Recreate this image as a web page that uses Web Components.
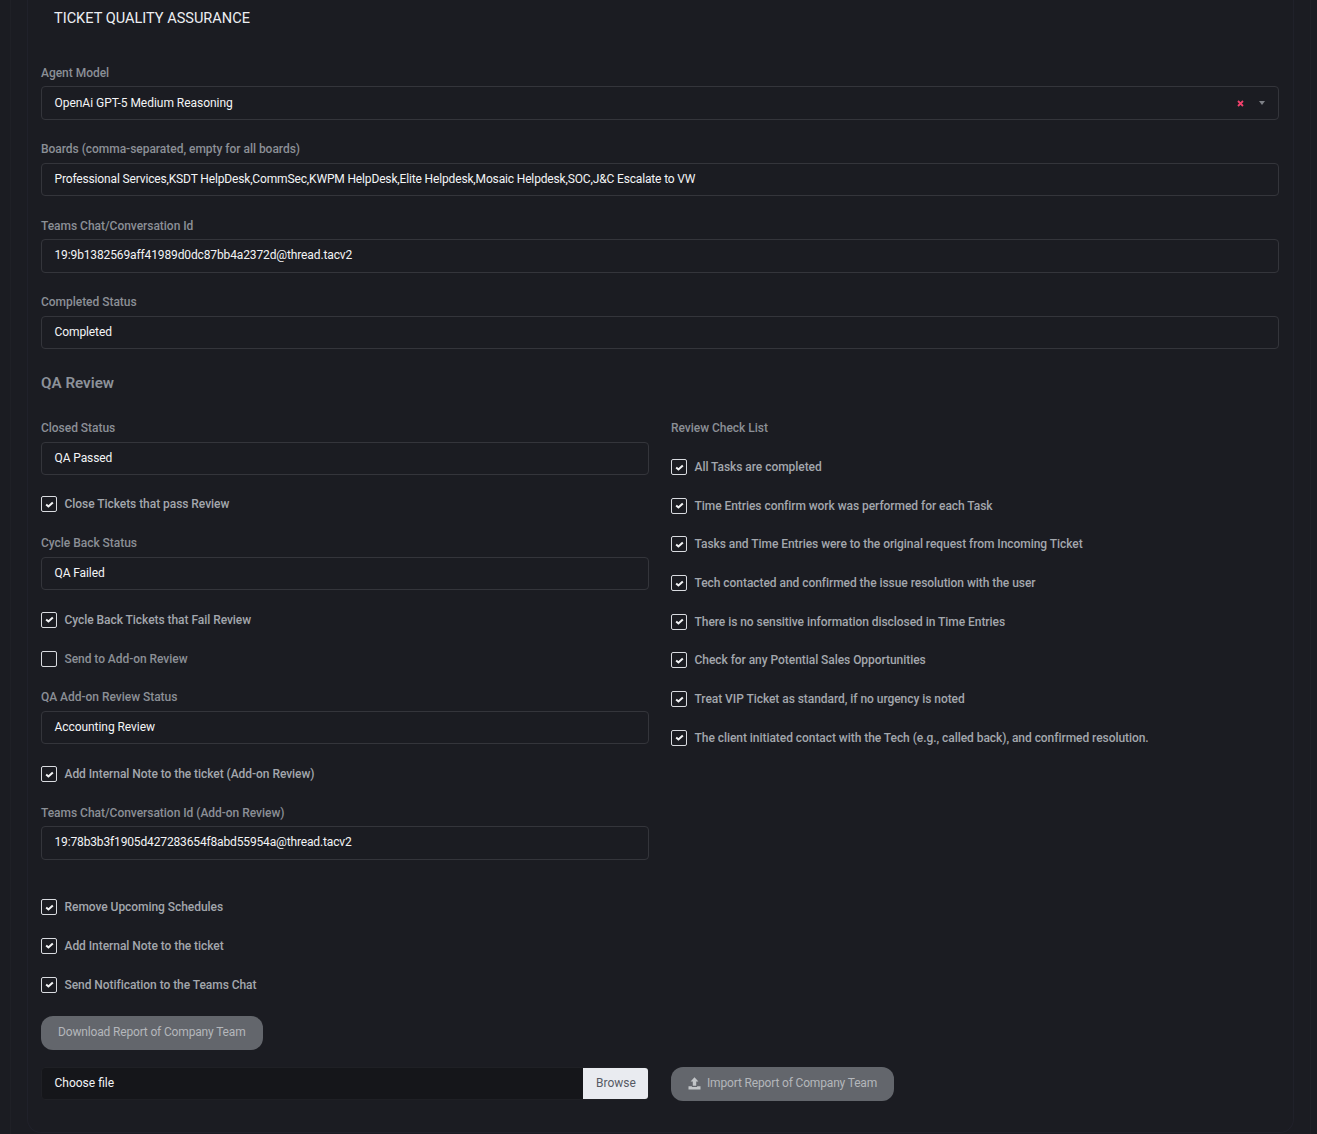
<!DOCTYPE html>
<html>
<head>
<meta charset="utf-8">
<title>Ticket Quality Assurance</title>
<style>
  html, body { margin: 0; height: 1134px; overflow: hidden; background: #1b1c22; }
  body { font: 12px/18px Roboto, "Liberation Sans", sans-serif; color: #a3a7ad; }
</style>
</head>
<body>
<qa-page>
  <qa-field label="Agent Model"><qa-select value="OpenAi GPT-5 Medium Reasoning" style="letter-spacing:-.03px"></qa-select></qa-field>
  <qa-field label="Boards (comma-separated, empty for all boards)"><qa-input value="Professional Services,KSDT HelpDesk,CommSec,KWPM HelpDesk,Elite Helpdesk,Mosaic Helpdesk,SOC,J&amp;C Escalate to VW" style="letter-spacing:-.15px"></qa-input></qa-field>
  <qa-field label="Teams Chat/Conversation Id"><qa-input value="19:9b1382569aff41989d0dc87bb4a2372d@thread.tacv2" style="letter-spacing:-.125px"></qa-input></qa-field>
  <qa-field label="Completed Status"><qa-input value="Completed" style="letter-spacing:-.1px"></qa-input></qa-field>

  <qa-section heading="QA Review">
    <div slot="left">
      <qa-field label="Closed Status"><qa-input value="QA Passed" style="letter-spacing:-.1px"></qa-input></qa-field>
      <qa-check checked style="margin-bottom:21.5px">Close Tickets that pass Review</qa-check>
      <qa-field label="Cycle Back Status"><qa-input value="QA Failed" style="letter-spacing:-.1px"></qa-input></qa-field>
      <qa-check checked style="margin-bottom:21.6px">Cycle Back Tickets that Fail Review</qa-check>
      <qa-check style="margin-bottom:20.4px">Send to Add-on Review</qa-check>
      <qa-field label="QA Add-on Review Status" style="margin-bottom:20.9px"><qa-input value="Accounting Review" style="letter-spacing:-.06px"></qa-input></qa-field>
      <qa-check checked style="margin-bottom:20.7px">Add Internal Note to the ticket (Add-on Review)</qa-check>
      <qa-field label="Teams Chat/Conversation Id (Add-on Review)"><qa-input value="19:78b3b3f1905d427283654f8abd55954a@thread.tacv2" style="letter-spacing:-.145px"></qa-input></qa-field>
      <qa-check checked style="margin-top:38.6px">Remove Upcoming Schedules</qa-check>
      <qa-check checked>Add Internal Note to the ticket</qa-check>
      <qa-check checked>Send Notification to the Teams Chat</qa-check>
    </div>
    <div slot="right" style="--gap:20.9px">
      <qa-field label="Review Check List" style="margin-bottom:0"></qa-field>
      <div style="height:16.6px"></div>
      <qa-check checked>All Tasks are completed</qa-check>
      <qa-check checked>Time Entries confirm work was performed for each Task</qa-check>
      <qa-check checked>Tasks and Time Entries were to the original request from Incoming Ticket</qa-check>
      <qa-check checked>Tech contacted and confirmed the issue resolution with the user</qa-check>
      <qa-check checked>There is no sensitive information disclosed in Time Entries</qa-check>
      <qa-check checked>Check for any Potential Sales Opportunities</qa-check>
      <qa-check checked>Treat VIP Ticket as standard, if no urgency is noted</qa-check>
      <qa-check checked>The client initiated contact with the Tech (e.g., called back), and confirmed resolution.</qa-check>
    </div>
  </qa-section>

  <qa-button style="margin-top:1.6px">Download Report of Company Team</qa-button>
  <qa-import></qa-import>
</qa-page>

<script>
(function () {
  // outer page frame + panel
  class QaPage extends HTMLElement {
    constructor() {
      super();
      this.attachShadow({ mode: 'open' }).innerHTML = `
        <style>
          :host { display: block; height: 1134px; box-sizing: border-box; padding: 0 6px 0 10px; overflow: hidden; }
          .outer { height: 100%; box-sizing: border-box; padding: 0 16px; border-left: 1px solid #1f2026; border-right: 1px solid #1f2026; }
          .panel { height: 1133px; box-sizing: border-box; padding: 0 14px 0 13px; border: 1px solid #20212a; border-top: 0; border-radius: 0 0 14px 14px; }
          h1 { margin: 0; padding: 10px 0 0 13px; height: 63.5px; box-sizing: border-box; font: 400 14.55px/18px Roboto, sans-serif; color: #eceef2; }
        </style>
        <div class="outer"><div class="panel">
          <h1>TICKET QUALITY ASSURANCE</h1>
          <slot></slot>
        </div></div>`;
    }
  }

  class QaField extends HTMLElement {
    constructor() {
      super();
      this.attachShadow({ mode: 'open' }).innerHTML = `
        <style>
          :host { display: block; margin-bottom: 20.3px; }
          label { display: block; height: 18px; margin-bottom: 4.7px; font-weight: 500; color: #8b8f96; line-height: 18px; letter-spacing: -.03px; }
        </style>
        <label></label><slot></slot>`;
    }
    connectedCallback() {
      this.shadowRoot.querySelector('label').textContent = this.getAttribute('label');
    }
  }

  class QaInput extends HTMLElement {
    constructor() {
      super();
      this.attachShadow({ mode: 'open' }).innerHTML = `
        <style>
          :host { display: block; height: 33.3px; box-sizing: border-box; padding: 0 12.5px; border: 1px solid #34353b; border-radius: 4px;
            color: #f3f4f6; font-weight: 400; line-height: 31.8px; white-space: nowrap; }
        </style>
        <span></span>`;
    }
    connectedCallback() {
      this.shadowRoot.querySelector('span').textContent = this.getAttribute('value');
    }
  }

  class QaSelect extends HTMLElement {
    constructor() {
      super();
      this.attachShadow({ mode: 'open' }).innerHTML = `
        <style>
          :host { display: flex; align-items: center; height: 34px; box-sizing: border-box; padding: 0 13px 0 12.5px; border: 1px solid #34353b; border-radius: 4px; color: #f3f4f6; }
          span { flex: 1; }
          svg { display: block; }
          .clear { margin-right: 15px; }
        </style>
        <span></span>
        <svg class="clear" width="7" height="7" viewBox="0 0 7 7"><path d="M1 1l5 5M6 1L1 6" stroke="#f1416c" stroke-width="1.8"/></svg>
        <svg class="caret" width="6" height="4" viewBox="0 0 6 4"><path d="M0 0h6L3 4z" fill="#7e8187"/></svg>`;
    }
    connectedCallback() {
      this.shadowRoot.querySelector('span').textContent = this.getAttribute('value');
    }
  }

  class QaSection extends HTMLElement {
    constructor() {
      super();
      this.attachShadow({ mode: 'open' }).innerHTML = `
        <style>
          :host { display: block; }
          h2 { margin: 0; height: 49.5px; padding-top: 4.5px; box-sizing: border-box; font: 600 15.2px/18px Roboto, sans-serif; color: #8d929a; }
          .cols { display: grid; grid-template-columns: 608px 608px; column-gap: 22px; }
        </style>
        <h2></h2>
        <div class="cols"><div><slot name="left"></slot></div><div><slot name="right"></slot></div></div>`;
    }
    connectedCallback() {
      this.shadowRoot.querySelector('h2').textContent = this.getAttribute('heading');
    }
  }

  class QaCheck extends HTMLElement {
    constructor() {
      super();
      this.attachShadow({ mode: 'open' }).innerHTML = `
        <style>
          :host { display: flex; align-items: center; gap: 7.5px; height: 17.8px; margin-bottom: var(--gap, 21px); font-weight: 500; color: #a3a7ad; white-space: nowrap; letter-spacing: -.05px; }
          .box { width: 16px; height: 16px; flex: none; box-sizing: border-box; border: 1.5px solid #d9dbe0; border-radius: 2px; display: flex; align-items: center; justify-content: center; }
          svg { display: none; }
          :host([checked]) svg { display: block; }
          :host(:not([checked])) { color: #8b8f96; }
        </style>
        <div class="box"><svg width="9" height="7" viewBox="0 0 10 8"><path d="M1.2 4l2.6 2.3 5-4.7" fill="none" stroke="#f2f3f5" stroke-width="2.3"/></svg></div>
        <span><slot></slot></span>`;
    }
  }

  class QaButton extends HTMLElement {
    constructor() {
      super();
      this.attachShadow({ mode: 'open' }).innerHTML = `
        <style>
          :host { display: flex; align-items: center; gap: 6px; width: fit-content; height: 33.5px; box-sizing: border-box; padding: 0 17px 1px; border-radius: 12px; background: #63666c; color: #b4b7bb; white-space: nowrap; letter-spacing: -.16px; }
        </style>
        <slot></slot>`;
    }
  }

  class QaImport extends HTMLElement {
    constructor() {
      super();
      this.attachShadow({ mode: 'open' }).innerHTML = `
        <style>
          :host { display: grid; grid-template-columns: 608px 608px; column-gap: 22px; margin-top: 17.3px; align-items: start; }
          .file { display: flex; height: 33.5px; box-sizing: border-box; border: 1px solid #1f2025; border-radius: 4px; background: #15161a; overflow: hidden; }
          .name { flex: 1; padding-left: 12.5px; color: #f3f4f6; line-height: 31.5px; }
          .browse { width: 64px; padding-left: 1px; background: #e9ebf0; color: #565a64; text-align: center; line-height: 31.5px; }
          qa-button { height: 34px; }
          svg { display: block; flex: none; }
        </style>
        <div class="file"><div class="name">Choose file</div><div class="browse">Browse</div></div>
        <div><qa-button>
          <svg width="13" height="13" viewBox="0 0 13 13"><path d="M6.5 .3L10.4 4.6H8.2V8.8H4.8V4.6H2.6z" fill="#c2c5c8"/><path d="M.5 9.2h3.4v.9h5.2v-.9h3.4v3.3H.5z" fill="#c2c5c8"/></svg>
          Import Report of Company Team
        </qa-button></div>`;
    }
  }

  customElements.define('qa-page', QaPage);
  customElements.define('qa-field', QaField);
  customElements.define('qa-input', QaInput);
  customElements.define('qa-select', QaSelect);
  customElements.define('qa-section', QaSection);
  customElements.define('qa-check', QaCheck);
  customElements.define('qa-button', QaButton);
  customElements.define('qa-import', QaImport);
})()
</script>
</body>
</html>
